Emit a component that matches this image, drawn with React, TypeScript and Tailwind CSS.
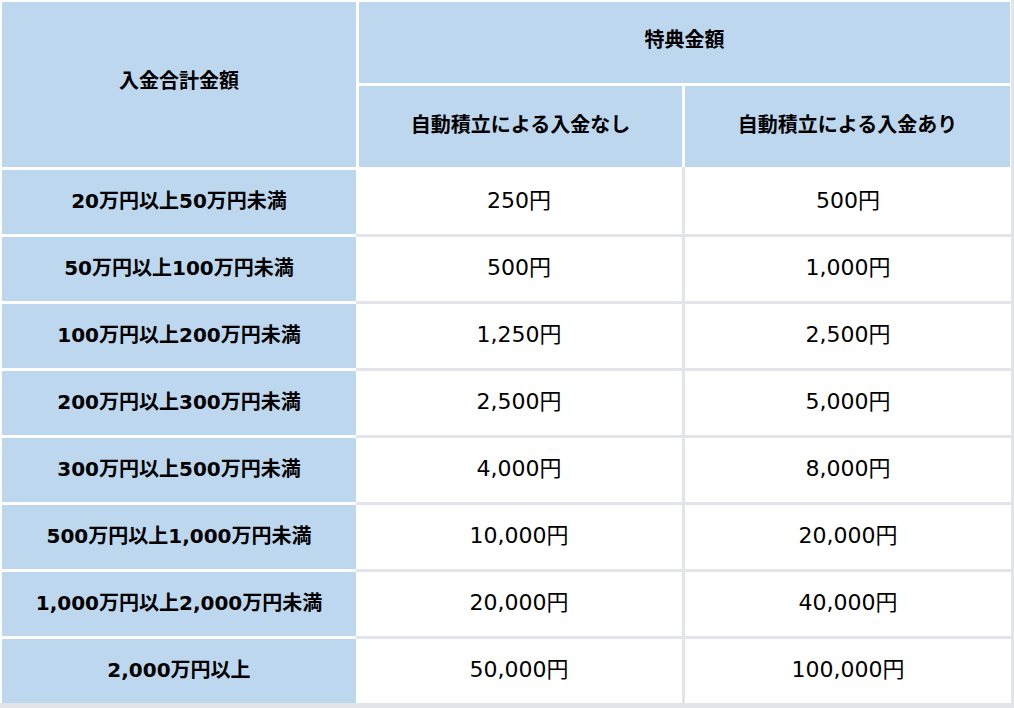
import React from "react";

const rows: [string, string, string][] = [
  ["20万円以上50万円未満", "250円", "500円"],
  ["50万円以上100万円未満", "500円", "1,000円"],
  ["100万円以上200万円未満", "1,250円", "2,500円"],
  ["200万円以上300万円未満", "2,500円", "5,000円"],
  ["300万円以上500万円未満", "4,000円", "8,000円"],
  ["500万円以上1,000万円未満", "10,000円", "20,000円"],
  ["1,000万円以上2,000万円未満", "20,000円", "40,000円"],
  ["2,000万円以上", "50,000円", "100,000円"],
];

export default function App() {
  return (
    <div
      className="w-[1014px] h-[708px] box-border bg-white border-r-[3px] border-b-[5px] border-[#e3e3ea] pl-[2px] pt-[2px] text-black overflow-hidden"
      style={{ fontFamily: '"DejaVu Sans", "Noto Sans CJK JP", sans-serif' }}
    >
      {/* header */}
      <div className="flex h-[165px]">
        <div className="w-[354px] bg-[#bdd7ee] flex items-center justify-center pb-[8px] text-[20px] font-bold">
          入金合計金額
        </div>
        <div className="w-[3px]" />
        <div className="flex-1 flex flex-col pr-[1px]">
          <div className="h-[81px] bg-[#bdd7ee] flex items-center justify-center pb-[5px] text-[20px] font-bold">
            特典金額
          </div>
          <div className="h-[3px]" />
          <div className="h-[81px] flex">
            <div className="w-[323px] bg-[#bdd7ee] flex items-center justify-center pb-[3px] text-[20px] font-bold">
              自動積立による入金なし
            </div>
            <div className="w-[3px]" />
            <div className="flex-1 bg-[#bdd7ee] flex items-center justify-center pb-[3px] text-[20px] font-bold">
              自動積立による入金あり
            </div>
          </div>
        </div>
      </div>
      <div className="h-[3px] flex">
        <div className="w-[680px]" />
        <div className="w-[3px] bg-[#e3e3ea]" />
      </div>
      {/* body */}
      {rows.map((r, i) => (
        <React.Fragment key={i}>
          <div className="flex h-[64px]">
            <div className="w-[354px] bg-[#bdd7ee] flex items-center justify-center pb-[3px] text-[20px] font-bold">
              {r[0]}
            </div>
            <div className="w-[329px] box-border border-r-[3px] border-[#e3e3ea] flex items-center justify-center pb-[3px] text-[22px]">
              {r[1]}
            </div>
            <div className="flex-1 flex items-center justify-center pb-[3px] text-[22px]">
              {r[2]}
            </div>
          </div>
          {i < rows.length - 1 && (
            <div className="flex h-[3px]">
              <div className="w-[354px]" />
              <div className="flex-1 bg-[#e3e3ea]" />
            </div>
          )}
        </React.Fragment>
      ))}
    </div>
  );
}
